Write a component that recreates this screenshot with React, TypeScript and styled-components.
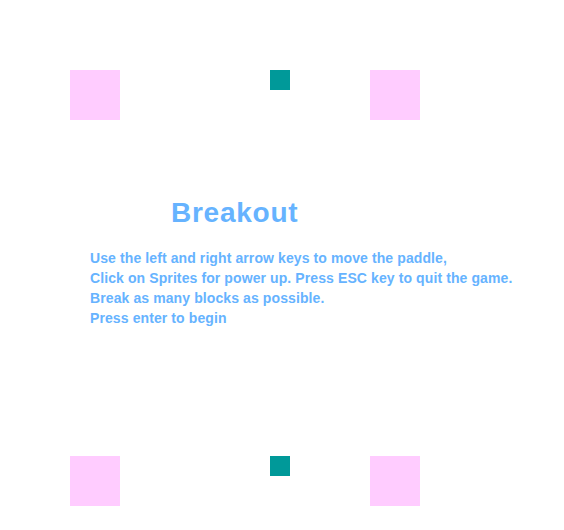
import React from "react";
import styled, { createGlobalStyle } from "styled-components";

const Global = createGlobalStyle`
  html, body { margin: 0; padding: 0; background: #ffffff; }
  body { font-family: "Liberation Sans", Arial, sans-serif; }
`;

const Board = styled.div`
  box-sizing: border-box;
  width: 564px;
  height: 530px;
  padding: 70px 0 24px 70px;
  display: flex;
  flex-direction: column;
  background: #ffffff;
`;

const BlockRow = styled.div<{ $bottom?: boolean }>`
  display: grid;
  grid-template-columns: 200px 100px 50px;
  align-items: start;
  margin-top: ${(p) => (p.$bottom ? "auto" : "0")};
`;

const Block = styled.div<{ $kind: "brick" | "sprite" }>`
  width: ${(p) => (p.$kind === "brick" ? "50px" : "20px")};
  height: ${(p) => (p.$kind === "brick" ? "50px" : "20px")};
  background: ${(p) => (p.$kind === "brick" ? "#ffccff" : "#009999")};
`;

const Title = styled.h1`
  margin: 77px 0 0 0;
  padding-left: 101px;
  font-size: 28px;
  line-height: 32px;
  font-weight: bold;
  letter-spacing: 0.75px;
  color: #66b3ff;
`;

const Instructions = styled.div`
  margin-top: 19px;
  padding-left: 20px;
  font-size: 14px;
  line-height: 20px;
  font-weight: bold;
  letter-spacing: 0.1px;
  color: #66b3ff;
`;

const Line = styled.div``;

const Row = ({ bottom }: { bottom?: boolean }) => (
  <BlockRow $bottom={bottom}>
    <Block $kind="brick" />
    <Block $kind="sprite" />
    <Block $kind="brick" />
  </BlockRow>
);

export default function App() {
  return (
    <>
      <Global />
      <Board>
        <Row />
        <Title>Breakout</Title>
        <Instructions>
          <Line>Use the left and right arrow keys to move the paddle,</Line>
          <Line>Click on Sprites for power up. Press ESC key to quit the game.</Line>
          <Line>Break as many blocks as possible.</Line>
          <Line>Press enter to begin</Line>
        </Instructions>
        <Row bottom />
      </Board>
    </>
  );
}
